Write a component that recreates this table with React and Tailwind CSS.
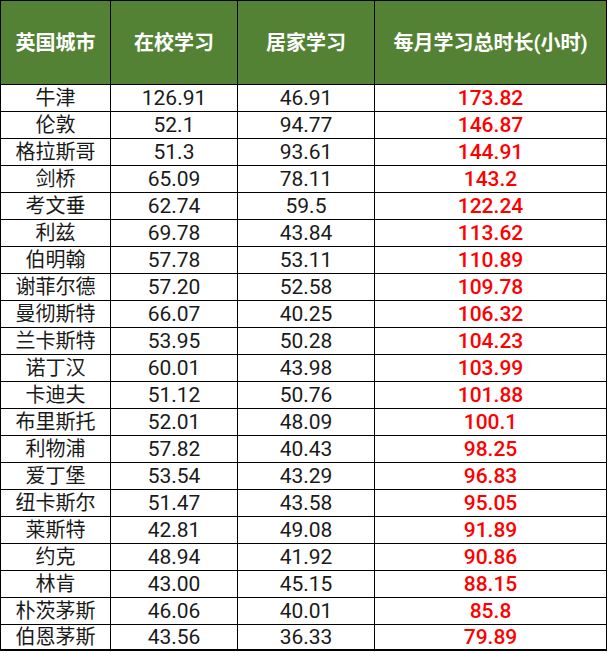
import React from "react";

const rows = [
  ["牛津", "126.91", "46.91", "173.82"],
  ["伦敦", "52.1", "94.77", "146.87"],
  ["格拉斯哥", "51.3", "93.61", "144.91"],
  ["剑桥", "65.09", "78.11", "143.2"],
  ["考文垂", "62.74", "59.5", "122.24"],
  ["利兹", "69.78", "43.84", "113.62"],
  ["伯明翰", "57.78", "53.11", "110.89"],
  ["谢菲尔德", "57.20", "52.58", "109.78"],
  ["曼彻斯特", "66.07", "40.25", "106.32"],
  ["兰卡斯特", "53.95", "50.28", "104.23"],
  ["诺丁汉", "60.01", "43.98", "103.99"],
  ["卡迪夫", "51.12", "50.76", "101.88"],
  ["布里斯托", "52.01", "48.09", "100.1"],
  ["利物浦", "57.82", "40.43", "98.25"],
  ["爱丁堡", "53.54", "43.29", "96.83"],
  ["纽卡斯尔", "51.47", "43.58", "95.05"],
  ["莱斯特", "42.81", "49.08", "91.89"],
  ["约克", "48.94", "41.92", "90.86"],
  ["林肯", "43.00", "45.15", "88.15"],
  ["朴茨茅斯", "46.06", "40.01", "85.8"],
  ["伯恩茅斯", "43.56", "36.33", "79.89"],
];

const headers = ["英国城市", "在校学习", "居家学习", "每月学习总时长(小时)"];

export default function App() {
  return (
    <div className="w-[608px] h-[653px] bg-white font-['Roboto','Noto_Sans_CJK_SC',sans-serif]">
      <table className="w-[606px] border-collapse table-fixed border-b-2 border-black">
        <colgroup>
          <col className="w-[110px]" />
          <col className="w-[127px]" />
          <col className="w-[137px]" />
          <col className="w-[232px]" />
        </colgroup>
        <thead>
          <tr className="h-[84px] bg-[#548235]">
            {headers.map((h) => (
              <th
                key={h}
                className="border border-black text-white text-[20px] font-bold text-center align-middle p-0"
              >
                {h}
              </th>
            ))}
          </tr>
        </thead>
        <tbody>
          {rows.map((r, i) => (
            <tr key={r[0]} className={i === rows.length - 1 ? "h-[25px]" : "h-[27px]"}>
              <td className="border border-black text-[20px] leading-[24px] text-[#1a1a1a] text-center p-0">
                {r[0]}
              </td>
              <td className="border border-black text-[21px] leading-[24px] text-[#1a1a1a] text-center p-0">
                {r[1]}
              </td>
              <td className="border border-black text-[21px] leading-[24px] text-[#1a1a1a] text-center p-0">
                {r[2]}
              </td>
              <td className="border border-black text-[21px] leading-[24px] text-[#ff0000] font-medium text-center p-0">
                {r[3]}
              </td>
            </tr>
          ))}
        </tbody>
      </table>
    </div>
  );
}
